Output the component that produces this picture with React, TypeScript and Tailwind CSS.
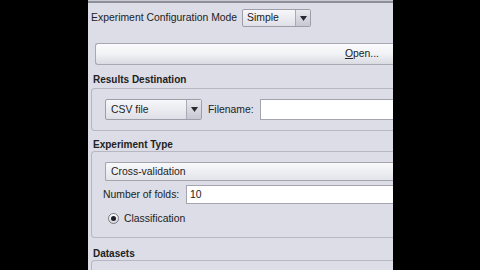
import React from "react";

const font = { fontFamily: '"Liberation Sans", Arial, sans-serif' };

function Arrow() {
  return (
    <div className="w-[15px] self-stretch flex items-center justify-center border-l border-[#a9aab5] bg-gradient-to-b from-[#e9eaef] to-[#c6c7d1]">
      <svg width="7" height="5" viewBox="0 0 7 5">
        <path d="M0 0 L7 0 L3.5 5 Z" fill="#2a2a35" />
      </svg>
    </div>
  );
}

export default function App() {
  return (
    <div className="w-[480px] h-[270px] bg-black flex overflow-hidden text-[10.4px] text-[#222]" style={font}>
      <div className="w-[88px] shrink-0 bg-black" />
      <div className="w-[305px] shrink-0 bg-[#dcdde6] flex flex-col overflow-hidden [&>*]:shrink-0">
        <div className="h-[1px] bg-[#c9cad3]" />
        <div className="h-[2px] bg-[#8d8e99]" />
        <div className="h-[6px]" />
        <div className="flex items-center h-[18px] pl-[3px]">
          <span className="w-[151px] whitespace-nowrap">Experiment Configuration Mode</span>
          <div className="w-[69px] h-[18px] flex border border-[#9d9ea9] rounded-[2px] bg-gradient-to-b from-[#f7f7fa] to-[#dfe0e7]">
            <span className="flex-1 pl-[4px] leading-[16px]">Simple</span>
            <Arrow />
          </div>
        </div>
        <div className="h-[16px]" />
        <div className="ml-[7px] h-[22px] flex items-center justify-end border border-r-0 border-[#a7a8b3] rounded-l-[3px] bg-gradient-to-b from-[#fbfbfd] via-[#f1f2f5] to-[#dadbe2]">
          <span className="mr-[14px]"><span className="underline">O</span>pen...</span>
        </div>
        <div className="h-[9px]" />
        <div className="pl-[5px] h-[12px] leading-[12px] text-[10px] font-bold">Results Destination</div>
        <div className="h-[2px]" />
        <div className="ml-[3px] h-[43px] border border-r-0 border-[#b6b7c1] rounded-l-[4px] flex items-center pl-[13px]">
          <div className="w-[97px] h-[21px] flex border border-[#9d9ea9] rounded-[2px] bg-gradient-to-b from-[#f7f7fa] to-[#dfe0e7]">
            <span className="flex-1 pl-[5px] leading-[19px]">CSV file</span>
            <Arrow />
          </div>
          <span className="ml-[6px] w-[52px]">Filename:</span>
          <div className="flex-1 h-[21px] bg-white border border-r-0 border-[#a3a4ae]" />
        </div>
        <div className="h-[8px]" />
        <div className="pl-[5px] h-[12px] leading-[12px] text-[10px] font-bold">Experiment Type</div>
        <div className="ml-[3px] h-[87px] border border-r-0 border-[#b6b7c1] rounded-l-[4px] flex flex-col pl-[13px] pt-[10px] [&>*]:shrink-0">
          <div className="h-[19px] flex items-center border border-r-0 border-[#a3a4ae] rounded-l-[2px] bg-gradient-to-b from-[#f9f9fb] to-[#e3e4ea] pl-[5px]">
            Cross-validation
          </div>
          <div className="h-[4px]" />
          <div className="flex items-center h-[19px] -ml-[2px]">
            <span className="w-[83px] whitespace-nowrap">Number of folds:</span>
            <div className="flex-1 h-[19px] bg-white border border-r-0 border-[#a3a4ae] pl-[3px] leading-[17px]">10</div>
          </div>
          <div className="h-[8px]" />
          <div className="flex items-center h-[13px] pl-[3px]">
            <div className="w-[11px] h-[11px] rounded-full border border-[#77787f] bg-gradient-to-b from-white to-[#d5d6dd] flex items-center justify-center">
              <div className="w-[5px] h-[5px] rounded-full bg-[#1e1e28]" />
            </div>
            <span className="ml-[5px]">Classification</span>
          </div>
        </div>
        <div className="h-[10px]" />
        <div className="pl-[5px] h-[12px] leading-[12px] text-[10px] font-bold">Datasets</div>
        <div className="ml-[3px] h-[20px] border border-r-0 border-[#b6b7c1] rounded-tl-[4px]" />
      </div>
      <div className="flex-1 bg-black" />
    </div>
  );
}
